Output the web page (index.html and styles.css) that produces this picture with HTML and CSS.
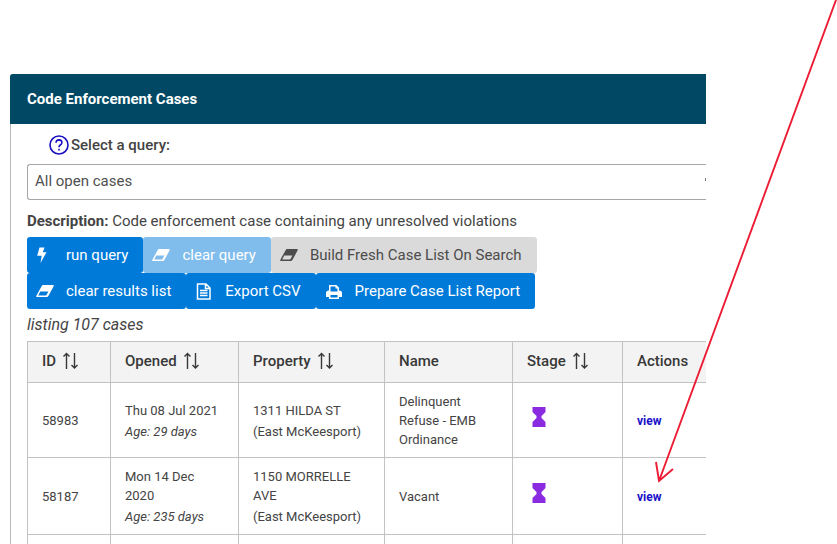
FILE: index.html
```html
<!DOCTYPE html>
<html lang="en">
<head>
<meta charset="utf-8">
<title>Code Enforcement Cases</title>
<link rel="stylesheet" href="styles.css">
</head>
<body>
<svg class="defs" aria-hidden="true">
  <symbol id="sort" viewBox="0 0 16 18"><path d="M4.500 17V2M1.500 4.500L4.500 1.500L7.500 4.500M12.500 1V16M9.500 13L12.500 16L15.500 13" fill="none" stroke="currentColor" stroke-width="1.400"/></symbol>
  <symbol id="eraser" viewBox="0 0 18 12"><path fill-rule="evenodd" d="M7.200 0H17Q18.300 0 17.500 1.600L12.500 10.800Q11.900 12 10.700 12H1Q-.2 12 .5 10.500L5.600 1.200Q6.200 0 7.200 0ZM4.300 6.500L2.200 10.500H10.200L12.400 6.500Z"/></symbol>
  <symbol id="hourglass" viewBox="0 0 14 20"><path d="M.5 0H13.500V5L9.500 9V11L13.500 15V20H.5V15L4.500 11V9L.5 5Z"/></symbol>
</svg>
<main class="page">
  <section class="panel">
    <h1 class="panel-title">Code Enforcement Cases</h1>
    <div class="panel-body">
      <div class="query-label">
        <svg class="help" viewBox="0 0 20 20" aria-hidden="true"><circle cx="10" cy="10" r="9"/><path d="M7 7.700Q7.200 4.900 10 4.900Q12.900 5 12.900 7.500Q12.900 9 11.300 10Q10 10.900 10 12.300M10 13.700V15.400"/></svg>
        <label for="query">Select a query:</label>
      </div>
      <select id="query" class="query"><option>All open cases</option></select>
      <p class="description"><b>Description:</b> Code enforcement case containing any unresolved violations</p>
      <div class="buttons">
        <button class="btn" type="button"><svg class="icon" viewBox="0 0 18 18"><path d="M3.500 1.500H8.500L6.800 6.200H10.500L4.500 17L5.700 9.800H1.200Z"/></svg>run query</button>
        <button class="btn faded" type="button"><svg class="icon eraser"><use href="#eraser"/></svg>clear query</button>
        <button class="btn plain" type="button"><svg class="icon eraser"><use href="#eraser"/></svg>Build Fresh Case List On Search</button>
      </div>
      <div class="buttons">
        <button class="btn" type="button"><svg class="icon eraser"><use href="#eraser"/></svg>clear results list</button>
        <button class="btn" type="button"><svg class="icon" viewBox="0 0 18 18"><path d="M2.500 2H11L15 6V17H2.500ZM10.500 2V6.500H15M5 8.500H12.500M5 11H12.500M5 13.500H12.500" fill="none" stroke="currentColor" stroke-width="1.500"/></svg>Export CSV</button>
        <button class="btn" type="button"><svg class="icon" viewBox="0 0 18 18"><path fill-rule="evenodd" d="M4 3H11.500L14 5.500V8.500Q17 8.500 17 11V15H14V17H4V15H1V11Q1 8.500 4 8.500ZM5.500 4.500V9.500H12.500V6.500H10.500V4.500ZM5.500 13V15.500H12.500V13Z"/></svg>Prepare Case List Report</button>
      </div>
      <p class="count">listing 107 cases</p>
      <table class="cases">
        <colgroup><col class="c-id"><col class="c-opened"><col class="c-property"><col class="c-name"><col class="c-stage"><col></colgroup>
        <thead>
          <tr>
            <th>ID<svg class="sort"><use href="#sort"/></svg></th>
            <th>Opened<svg class="sort"><use href="#sort"/></svg></th>
            <th>Property<svg class="sort"><use href="#sort"/></svg></th>
            <th>Name</th>
            <th>Stage<svg class="sort"><use href="#sort"/></svg></th>
            <th>Actions</th>
          </tr>
        </thead>
        <tbody>
          <tr>
            <td>58983</td>
            <td>Thu 08 Jul 2021<em>Age: 29 days</em></td>
            <td>1311 HILDA ST<span class="city">(East McKeesport)</span></td>
            <td>Delinquent Refuse - EMB Ordinance</td>
            <td><svg class="stage"><use href="#hourglass"/></svg></td>
            <td><a href="#case-58983">view</a></td>
          </tr>
          <tr>
            <td>58187</td>
            <td>Mon 14 Dec 2020<em>Age: 235 days</em></td>
            <td>1150 MORRELLE AVE<span class="city">(East McKeesport)</span></td>
            <td>Vacant</td>
            <td><svg class="stage"><use href="#hourglass"/></svg></td>
            <td><a href="#case-58187">view</a></td>
          </tr>
          <tr><td></td><td></td><td></td><td></td><td></td><td></td></tr>
        </tbody>
      </table>
    </div>
  </section>
</main>
<svg class="pointer" viewBox="0 0 180 484" aria-hidden="true"><path d="M180 0L3 481M0 462L3 481L17 469"/></svg>
</body>
</html>
```
FILE: styles.css
```css
* { box-sizing: border-box; }
body {
  margin: 0;
  height: 100vh;
  overflow: hidden;
  position: relative;
  background: #fff;
  color: #444;
  font: 15px/20px Roboto, sans-serif;
}
.defs { display: none; }
.page { padding: 74px 131px 0 10px; }
.panel { border-left: 1px solid #b8b8b8; border-radius: 3px 0 0 0; }
.panel-title {
  margin: 0 0 0 -1px;
  padding: 15px 17px;
  background: #004863;
  color: #fff;
  border-radius: 3px 0 0 0;
  font-size: 15px;
  font-weight: 700;
  line-height: 20px;
}
.panel-body { padding: 11px 0 0 16px; }
.query-label { display: flex; align-items: center; gap: 2px; padding-left: 22px; font-weight: 500; }
.help { width: 20px; height: 20px; fill: none; stroke: #1a10c0; stroke-width: 1.600; }
.query {
  display: block;
  appearance: none;
  width: 100%;
  height: 36px;
  margin-top: 9px;
  padding: 0 7px 2px;
  border: 1px solid #a6a6a6;
  border-right: 0;
  border-radius: 3px 0 0 3px;
  background: linear-gradient(#777, #777) right 13px / 1px 3px no-repeat #fff;
  color: #505050;
  font: inherit;
}
.description { margin: 11px 0 6px; }
.description b { font-weight: 700; }
.buttons { display: flex; }
.btn {
  display: flex;
  align-items: center;
  gap: 12px;
  height: 36px;
  padding: 0 15px 1px 9px;
  border: 0;
  border-radius: 3px;
  background: #007ad9;
  color: #fff;
  font: 400 15px/20px Roboto, sans-serif;
  white-space: nowrap;
}
.faded { background: #80bcec; }
.plain { background: #dadada; color: #4c4c4c; }
.icon { width: 18px; height: 18px; fill: currentColor; flex: none; }
.icon.eraser { height: 12px; }
.count { margin: 6px 0; font-size: 16px; font-style: italic; }
.cases { width: 100%; table-layout: fixed; border-collapse: collapse; font-size: 13px; line-height: 19px; }
.c-id { width: 83px; }
.c-opened { width: 128px; }
.c-property { width: 146px; }
.c-name { width: 128px; }
.c-stage { width: 110px; }
.cases th, .cases td { border: 1px solid #c2c2c2; padding: 9px 14px 8px; text-align: left; }
.cases th:last-child, .cases td:last-child { border-right: 0; }
.cases th { height: 41px; padding: 0 14px 2px; background: #f3f3f3; color: #383838; font-size: 15px; font-weight: 500; }
.sort { width: 16px; height: 18px; margin-left: 6px; vertical-align: -4px; }
.cases em, .city { display: block; margin-top: 2px; }
.stage { display: block; width: 14px; height: 20px; margin: 0 0 7px 5px; fill: #8a2be2; }
.cases a { color: #1a10c8; font-size: 12px; font-weight: 700; text-decoration: none; }
.pointer {
  position: absolute;
  top: 0;
  left: 656px;
  width: 180px;
  height: 484px;
  overflow: visible;
  fill: none;
  stroke: #ec1c34;
  stroke-width: 1.900;
  pointer-events: none;
}
```
